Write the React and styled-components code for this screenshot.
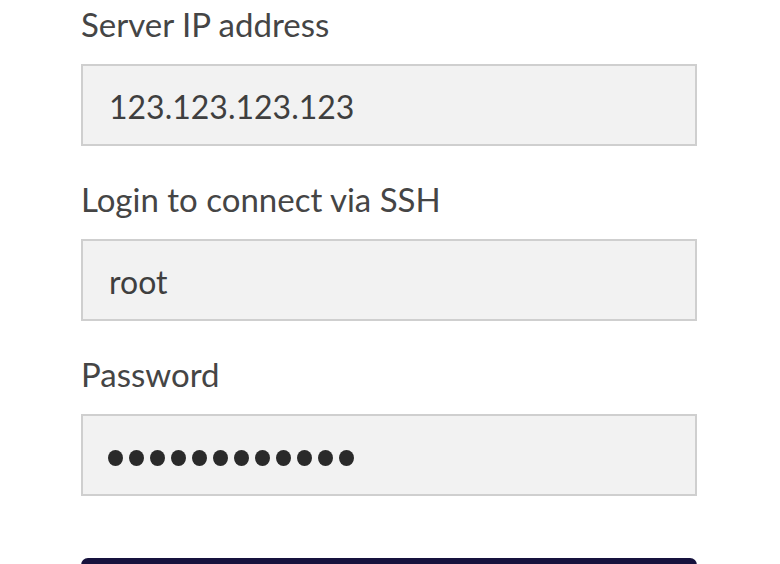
import React from 'react';
import styled, { createGlobalStyle } from 'styled-components';

const GlobalStyle = createGlobalStyle`
  html, body {
    margin: 0;
    padding: 0;
    background: #ffffff;
    font-family: Lato, "Open Sans", sans-serif;
    overflow: hidden;
  }
`;

const Form = styled.form`
  width: 616px;
  padding: 5px 0 0 81px;
  display: flex;
  flex-direction: column;
`;

const Field = styled.div`
  display: flex;
  flex-direction: column;
  margin-bottom: 34px;

  &:last-of-type {
    margin-bottom: 62px;
  }
`;

const Label = styled.label`
  font-size: 33px;
  line-height: 38px;
  color: #454545;
  margin-bottom: 21px;
`;

const Box = styled.div`
  box-sizing: border-box;
  height: 82px;
  border: 2px solid #cfcfcf;
  background: #f2f2f2;
  display: flex;
  align-items: center;
  padding: 2px 0 0 26px;
  font-size: 32px;
  color: #3f3f3f;
`;

const Dots = styled.div`
  display: flex;
  gap: 6px;
  margin: 4px 0 0 -1px;
`;

const Dot = styled.span`
  width: 15px;
  height: 16px;
  border-radius: 50%;
  background: #2a2a2a;
`;

const Submit = styled.button`
  height: 60px;
  width: 616px;
  border: none;
  border-radius: 7px;
  background: #16123d;
  color: #fff;
`;

const fields = [
  { label: 'Server IP address', value: '123.123.123.123' },
  { label: 'Login to connect via SSH', value: 'root' },
  { label: 'Password', secret: 12 },
];

export default function App() {
  return (
    <>
      <GlobalStyle />
      <Form>
        {fields.map((f) => (
          <Field key={f.label}>
            <Label>{f.label}</Label>
            <Box>
              {f.secret ? (
                <Dots>
                  {Array.from({ length: f.secret }).map((_, i) => (
                    <Dot key={i} />
                  ))}
                </Dots>
              ) : (
                f.value
              )}
            </Box>
          </Field>
        ))}
        <Submit type="button" />
      </Form>
    </>
  );
}
